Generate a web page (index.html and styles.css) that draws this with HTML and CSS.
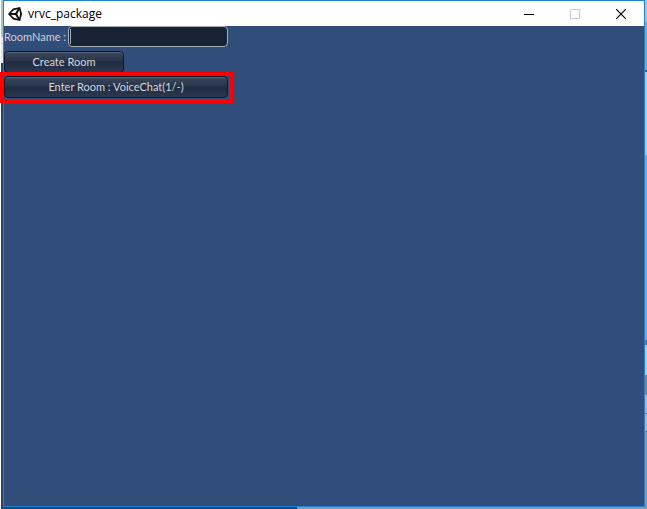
FILE: index.html
```
<!DOCTYPE html>
<html lang="en">
<head>
    <meta charset="UTF-8">
    <title>vrvc_package</title>
    <link rel="stylesheet" href="styles.css">
</head>
<body>
<div class="desktop">
    <div class="window">
        <div class="titlebar">
            <svg class="logo" viewBox="0 0 14 14" width="14" height="14" aria-hidden="true">
                <path d="M0 7L5 1.6L12.2 0L14 7L12.2 14L5 12.4Z" fill="#111"/>
                <path d="M3 6L5.8 3.2L9.6 2.3L7.3 6ZM3 8L5.8 10.8L9.6 11.7L7.3 8ZM9.2 7L11.3 3L12.1 7L11.3 11Z" fill="#fff"/>
            </svg>
            <h1 class="title">vrvc_package</h1>
            <button class="winbtn" type="button" aria-label="Minimize">
                <svg viewBox="0 0 10 10" width="10" height="10"><path d="M0 5.5H10" stroke="#000"/></svg>
            </button>
            <button class="winbtn" type="button" aria-label="Maximize" disabled>
                <svg viewBox="0 0 10 10" width="10" height="10"><path d="M.5 .5H9.5V9.5H.5Z" fill="none" stroke="#ccc"/></svg>
            </button>
            <button class="winbtn" type="button" aria-label="Close">
                <svg viewBox="0 0 10 10" width="10" height="10"><path d="M0 0L10 10M10 0L0 10" stroke="#000" stroke-width="1.2"/></svg>
            </button>
        </div>
        <form class="scene">
            <div class="row">
                <label for="room">RoomName :</label>
                <input class="field" id="room" type="text">
            </div>
            <button class="btn create" type="button">Create Room</button>
            <div class="marked">
                <button class="btn" type="button">Enter Room : VoiceChat(1/-)</button>
            </div>
        </form>
    </div>
    <div class="behind"></div>
</div>
</body>
</html>
```
FILE: styles.css
```
* { box-sizing: border-box; }
body { margin: 0; }

/* strips of the desktop that show round the window */
.desktop {
    display: flex;
    height: 100vh;
    padding: 0 0 2px 3px;
    background:
        linear-gradient(#fff, #fff) 0 0 / 1px 100% no-repeat,
        linear-gradient(#a8c4c8 0 37px, #e4e8ea 37px 63px, #26416b 63px) 0 0 / 3px 100% no-repeat,
        linear-gradient(90deg, #26416b 0 297px, #949494 297px);
}
.behind {
    width: 2px;
    margin-bottom: -2px;
    background: linear-gradient(#a3c5d2 0 22px, #7fa6b8 22px 70px, #557 70px 72px, #a9c8cf 72px 155px,
        #7fa5c2 155px 340px, #5f7480 340px 345px, #a9ccd5 345px 375px, #857f80 375px 395px,
        #b4b2b8 395px 413px, #777 413px 414px, #b4b4b4 414px 431px, #777 431px 432px, #949494 432px);
}
.window {
    display: flex;
    flex: 1;
    flex-direction: column;
    border: 1px solid #1e82d7;
    background: #314d79;
}

.titlebar {
    display: flex;
    align-items: center;
    height: 25px;
    padding-left: 4px;
    background: #fff;
}
.title {
    flex: 1;
    margin: 0 0 0 6px;
    font: 12px "Open Sans", "Noto Sans", sans-serif;
    color: #000;
}
.winbtn {
    display: flex;
    align-items: center;
    justify-content: center;
    width: 46px;
    height: 25px;
    padding: 0;
    border: 0;
    background: none;
}

.scene {
    display: flex;
    flex-direction: column;
    align-items: flex-start;
    font: 11px/16px Lato, "Liberation Sans", sans-serif;
    color: #ccd0d7;
}
.row {
    display: flex;
    align-items: center;
    gap: 4px;
}
.row label { width: 60px; white-space: nowrap; }
.field {
    width: 160px;
    height: 21px;
    padding: 2px 4px;
    border: 1px solid #a7adb7;
    border-radius: 4px;
    /* text cursor at the left edge */
    background: linear-gradient(#a7adb7, #a7adb7) 1px 50% / 1px 15px no-repeat #182436;
    font: inherit;
    color: inherit;
}
.btn {
    display: block;
    width: 224px;
    height: 22px;
    padding: 0;
    border: 1px solid #0f1826;
    border-radius: 4px;
    background: linear-gradient(#3d485b, #28344a 45%, #202c42 50%, #2b384f);
    box-shadow: inset 0 1px #566176;
    font: inherit;
    color: #d6d9de;
}
.create {
    width: 120px;
    margin-top: 4px;
}
.marked {
    margin: -1px 0 0 -4px;
    padding: 0 1px 1px 0;
    border: 4px solid #f00;
}
```
